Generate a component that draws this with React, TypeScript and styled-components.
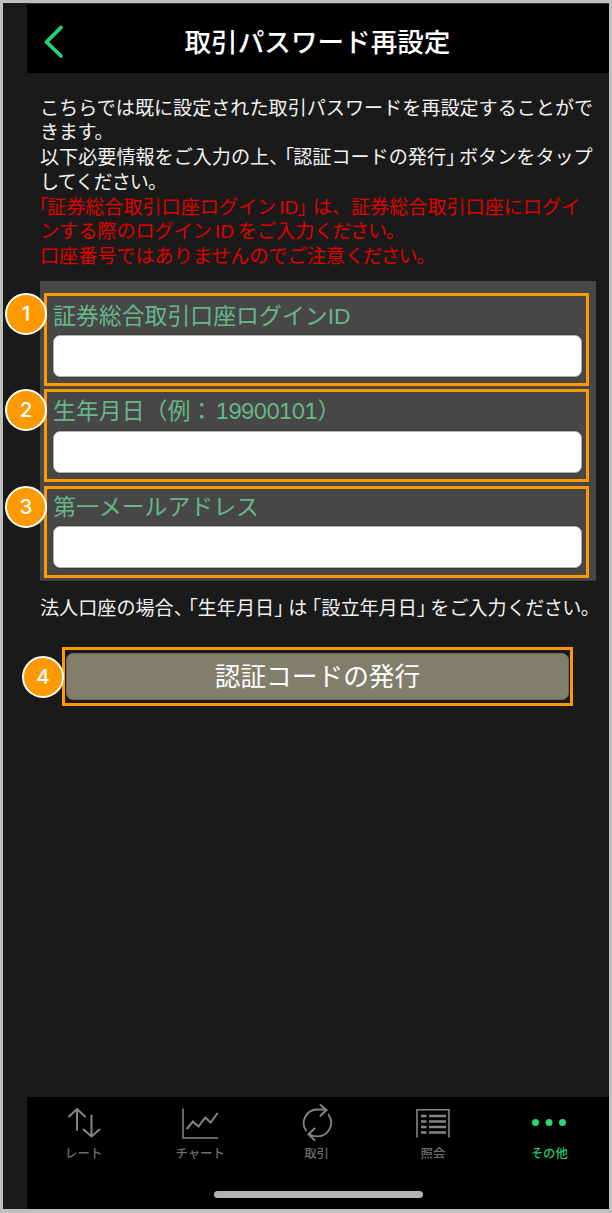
import React from "react";
import styled, { createGlobalStyle } from "styled-components";

const GlobalStyle = createGlobalStyle`
  *, *::before, *::after { box-sizing: border-box; }
  body {
    margin: 0;
    background: #bfbfbf;
    font-family: "Noto Sans CJK JP", sans-serif;
    text-spacing-trim: space-all;
  }
`;

const Frame = styled.div`
  width: 612px;
  height: 1213px;
  padding: 3px 3px 4px;
  background: #bfbfbf;
  display: flex;
`;

const Backdrop = styled.div`
  flex: 1;
  min-width: 0;
  display: flex;
  padding-left: 24px;
  background: #1a1a1a;
`;

const Screen = styled.div`
  flex: 1;
  min-width: 0;
  display: flex;
  flex-direction: column;
`;

const Header = styled.header`
  height: 70px;
  padding: 7px 0 0 15px;
  display: grid;
  grid-template-columns: 24px 1fr 40px;
  align-items: center;
  background: #000;
  border-top: 1px solid #333;
`;

const Title = styled.h1`
  margin: -3px 0 0;
  text-align: center;
  color: #fff;
  font-size: 26.6px;
  line-height: 36px;
  font-weight: 500;
  white-space: nowrap;
`;

const Content = styled.main`
  flex: 1;
  display: flex;
  flex-direction: column;
  padding: 21.5px 13px 0;
`;

const Intro = styled.div`
  height: 186.5px;
`;

const Paragraph = styled.p<{ $color?: string; $gap?: number }>`
  margin: 0 0 ${(p) => p.$gap ?? 0}px;
  font-size: 19.1px;
  line-height: 24.4px;
  white-space: nowrap;
  color: ${(p) => p.$color ?? "#f2f2f2"};
`;

const Mark = styled.span<{ $before?: number; $after?: number }>`
  display: inline-block;
  font-feature-settings: "halt";
  margin-left: ${(p) => p.$before ?? 0}px;
  margin-right: ${(p) => p.$after ?? 0}px;
`;

const Tight = styled.span<{ $by: number }>`
  letter-spacing: -${(p) => p.$by}px;
`;

const Latin = styled.span<{ $pad?: string }>`
  font-family: "Liberation Sans", sans-serif;
  line-height: 0;
  padding: ${(p) => p.$pad ?? "0"};
`;

const Digits = styled.span`
  font-family: Inter, sans-serif;
  font-feature-settings: "tnum";
  font-size: 22px;
  line-height: 0;
  letter-spacing: -1.6px;
  padding: 0 1px 0 2px;
`;

const Form = styled.form`
  width: 556px;
  height: 300px;
  padding: 12px 7px 2px 4px;
  display: flex;
  flex-direction: column;
  background: #474747;
  border-bottom: 1px solid #3a3a3a;
`;

const Field = styled.label<{ $height: number; $gap: number }>`
  position: relative;
  display: flex;
  flex-direction: column;
  height: ${(p) => p.$height}px;
  margin-bottom: ${(p) => p.$gap}px;
  padding: 0 4px 0 6px;
  border: 3px solid #ff9900;
`;

const FieldLabel = styled.span<{ $height: number; $line: number }>`
  height: ${(p) => p.$height}px;
  line-height: ${(p) => p.$line}px;
  font-size: 22.9px;
  color: #66b88a;
  white-space: nowrap;
`;

const Input = styled.input`
  display: block;
  width: 529px;
  height: 42px;
  border: 1px solid #b5b5b5;
  border-radius: 7px;
  background: #fff;
  outline: none;
  box-shadow: 0 0 0 1px #3c3c3c;
`;

const Badge = styled.span<{ $top: number; $left?: number }>`
  position: absolute;
  left: ${(p) => p.$left ?? -42}px;
  top: ${(p) => p.$top}px;
  width: 42px;
  height: 42px;
  border: 2px solid #fff;
  border-radius: 50%;
  background: #ff9900;
  color: #fff;
  display: flex;
  align-items: center;
  justify-content: center;
  font: 500 20.5px/1 Inter, sans-serif;
`;

const Note = styled.div`
  padding-top: 14px;
  height: 66px;
`;

const ActionFrame = styled.div`
  position: relative;
  width: 511px;
  height: 59px;
  margin-left: 22px;
  padding: 3px 1px;
  border: 3px solid #ff9900;
  display: flex;
`;

const ActionButton = styled.button`
  flex: 1;
  padding: 0 0 3px;
  border: 1px solid #6b6858;
  border-radius: 7px;
  background: #827e6c;
  color: #fff;
  font-family: inherit;
  font-size: 25.7px;
  line-height: 42px;
`;

const TabBar = styled.nav`
  height: 112px;
  background: #000;
  display: flex;
  flex-direction: column;
  align-items: center;
`;

const Tabs = styled.div`
  display: flex;
  width: 582px;
  margin-left: -3px;
  height: 94px;
`;

const Tab = styled.div<{ $active?: boolean }>`
  flex: 1;
  display: flex;
  flex-direction: column;
  align-items: center;
  padding-top: 6px;
  color: ${(p) => (p.$active ? "#26d873" : "#858585")};
`;

const TabLabel = styled.span<{ $active?: boolean }>`
  font-size: 12.4px;
  line-height: 20px;
  color: ${(p) => (p.$active ? "#22c76a" : "#6e6e6e")};
  font-weight: 500;
`;

const HomeIndicator = styled.div`
  width: 209px;
  height: 7px;
  border-radius: 4px;
  background: #b3b3b3;
`;

const Back = () => (
  <svg width="24" height="36" viewBox="0 0 24 36" fill="none" stroke="#24d673" strokeWidth="3.8" strokeLinecap="round" strokeLinejoin="round">
    <path d="M19 3.5 L4.5 18 L19 32" />
  </svg>
);

type IconProps = { children: React.ReactNode };
const Icon = ({ children }: IconProps) => (
  <svg width="40" height="40" viewBox="0 0 40 40" fill="none" stroke="currentColor" strokeWidth="2" strokeLinecap="round">
    {children}
  </svg>
);

const RateIcon = () => (
  <Icon>
    <path d="M13 27V7M5 13.5L13 6L21 13.5M27.5 12.5V32M19.5 26.5L27.5 33.5L35.5 26.5" />
  </Icon>
);
const ChartIcon = () => (
  <Icon>
    <path strokeWidth="1.5" d="M3 6V35H37.5" />
    <path d="M7.2 25.5L12.9 18.5L18.5 23.5L25.2 14.5L30.7 19.5L37.2 10.5" />
  </Icon>
);
const TradeIcon = () => (
  <Icon>
    <path strokeWidth="1.8" d="M9 27.5A13.5 13.5 0 0 1 20 6.5H28M31.5 11.8A13.5 13.5 0 0 1 20 33.3Q16 33.3 12.5 31.5" />
    <path d="M23.5 2L29.5 7L23.5 12.8M17.5 25.5L11.5 31.3L17.5 37" />
  </Icon>
);
const ListIcon = () => (
  <Icon>
    <path strokeWidth="1.6" strokeLinecap="butt" d="M4 34.5V6.7H36V34.5" />
    <path strokeWidth="2.7" strokeLinecap="butt" d="M8 13H13.5M16 13H33M8 18.5H13.5M16 18.5H33M8 24H13.5M16 24H33M8 29.5H13.5M16 29.5H33" />
  </Icon>
);
const MoreIcon = () => (
  <Icon>
    <g fill="currentColor" stroke="none">
      <circle cx="6.5" cy="19.5" r="3.5" />
      <circle cx="20" cy="19.5" r="3.5" />
      <circle cx="33.5" cy="19.5" r="3.5" />
    </g>
  </Icon>
);

const tabs = [
  { label: "レート", icon: <RateIcon /> },
  { label: "チャート", icon: <ChartIcon /> },
  { label: "取引", icon: <TradeIcon /> },
  { label: "照会", icon: <ListIcon /> },
  { label: "その他", icon: <MoreIcon />, active: true },
];

export default function App() {
  return (
    <>
      <GlobalStyle />
      <Frame>
        <Backdrop>
          <Screen>
            <Header>
              <Back />
              <Title>取引パスワード再設定</Title>
            </Header>
            <Content>
              <Intro>
                <Paragraph $gap={0.9}>
                  こちらでは既に設定された取引パスワードを再設定することがで
                  <br />
                  <Tight $by={0.3}>きます。</Tight>
                </Paragraph>
                <Paragraph $gap={0.9}>
                  以下必要情報をご入力の上<Mark $after={-3}>、</Mark>
                  <Mark $after={-1} $before={9}>「</Mark>認証コードの発行
                  <Mark $after={3.5}>」</Mark>ボタンをタップ
                  <br />
                  <Tight $by={0.9}>してください。</Tight>
                </Paragraph>
                <Paragraph $color="#e00000">
                  <Mark $before={-1} $after={-1.5}>「</Mark>証券総合取引口座ログイン
                  <Latin $pad="0 0 0 3px">ID</Latin>
                  <Mark $before={-1} $after={6}>」</Mark>は、証券総合取引口座にログイ
                  <br />
                  ンする際のログイン<Latin $pad="0 4px 0 3px">ID</Latin>をご入力
                  <Tight $by={1.2}>ください。</Tight>
                  <br />
                  口座番号ではありませんのでご注意<Tight $by={1.2}>ください。</Tight>
                </Paragraph>
              </Intro>
              <Form>
                <Field $height={93} $gap={3}>
                  <Badge $top={-3}>1</Badge>
                  <FieldLabel $height={39} $line={36}>
                    証券総合取引口座ログイン<Latin>ID</Latin>
                  </FieldLabel>
                  <Input />
                </Field>
                <Field $height={93} $gap={4}>
                  <Badge $top={-3}>2</Badge>
                  <FieldLabel $height={39} $line={35}>
                    生年月日（例：<Digits>19900101</Digits>）
                  </FieldLabel>
                  <Input />
                </Field>
                <Field $height={92} $gap={0}>
                  <Badge $top={-3}>3</Badge>
                  <FieldLabel $height={37} $line={32}>第一メールアドレス</FieldLabel>
                  <Input />
                </Field>
              </Form>
              <Note>
                <Paragraph>
                  法人口座の場合<Mark $after={5}>、</Mark>
                  <Mark>「</Mark>生年月日<Mark $after={4.5}>」</Mark>は
                  <Mark $before={4.5}>「</Mark>設立年月日
                  <Mark $after={4}>」</Mark>をご入力<Tight $by={0.6}>ください。</Tight>
                </Paragraph>
              </Note>
              <ActionFrame>
                <Badge $top={6} $left={-43}>4</Badge>
                <ActionButton type="button">認証コードの発行</ActionButton>
              </ActionFrame>
            </Content>
            <TabBar>
              <Tabs>
                {tabs.map((t) => (
                  <Tab key={t.label} $active={t.active}>
                    {t.icon}
                    <TabLabel $active={t.active}>{t.label}</TabLabel>
                  </Tab>
                ))}
              </Tabs>
              <HomeIndicator />
            </TabBar>
          </Screen>
        </Backdrop>
      </Frame>
    </>
  );
}
